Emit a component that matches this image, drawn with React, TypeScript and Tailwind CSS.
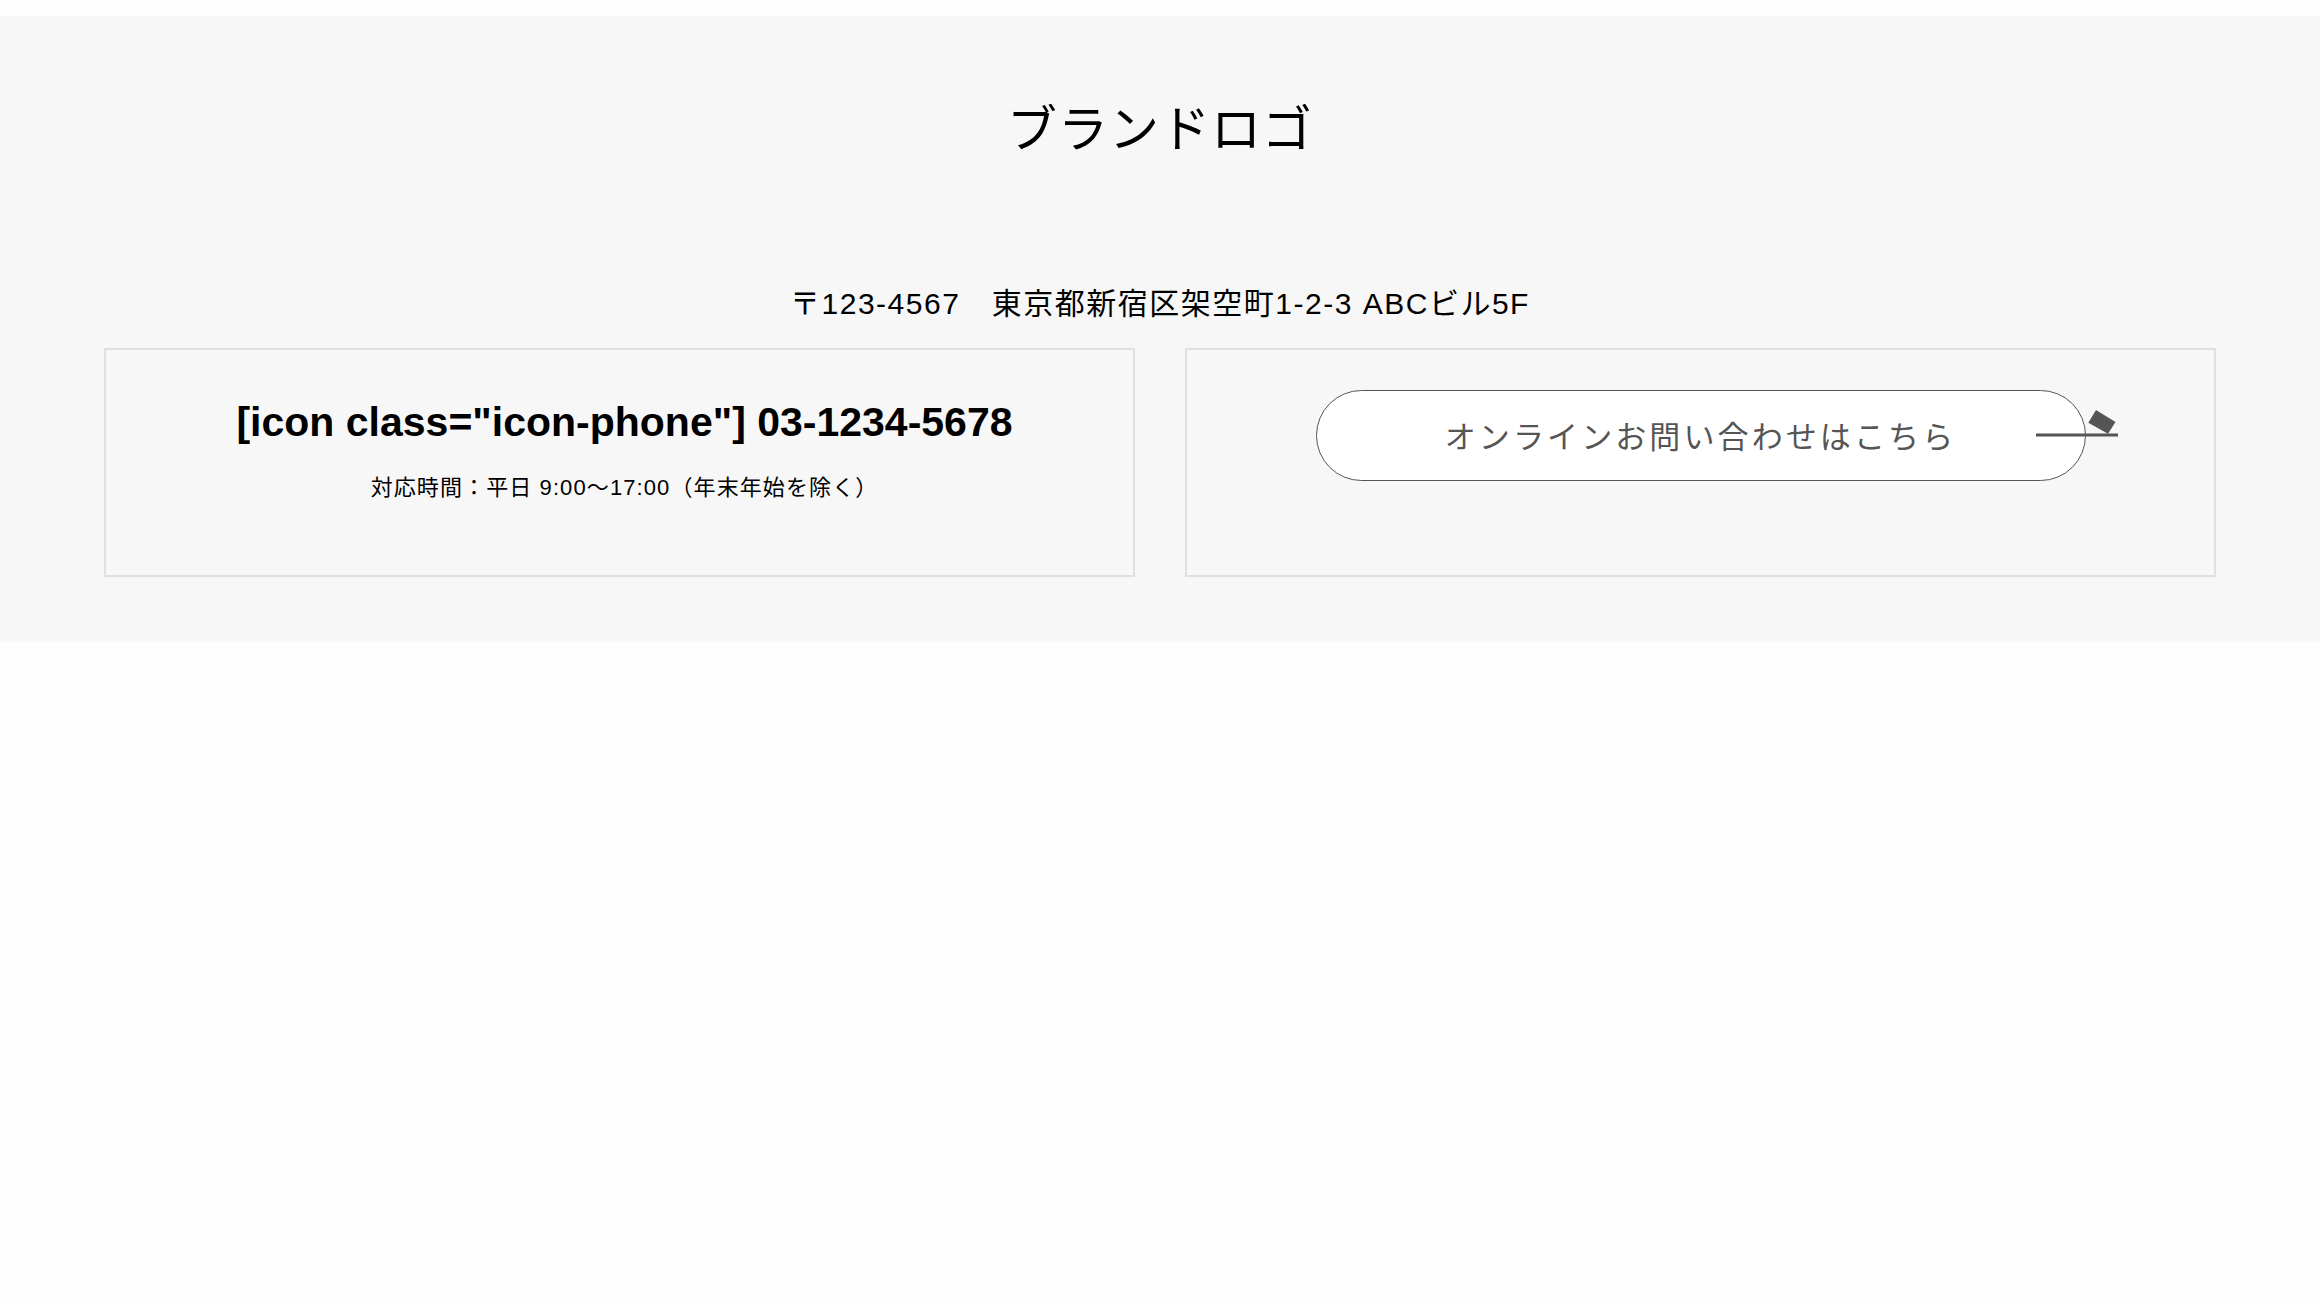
import React from "react";

const jp = "font-['Liberation_Sans','Noto_Sans_CJK_JP',sans-serif]";

function ArrowMark() {
  return (
    <svg className="absolute right-[-35px] top-[17px] pointer-events-none" width="84" height="30" viewBox="0 0 84 30" fill="none">
      <line x1="0" y1="27" x2="82" y2="27" stroke="#555" strokeWidth="3" />
      <polygon points="60,2 79.5,14 72,25.7 52.3,14.7" fill="#555" />
    </svg>
  );
}

export default function App() {
  return (
    <div className={`min-h-screen bg-[#fdfdfd] pt-[16px] ${jp}`}>
      <footer className="bg-[#f7f7f7] pt-[77px] pb-[65px]">
        <div className="text-center text-[50px] leading-[1.5] tracking-[1px] text-black">ブランドロゴ</div>

        <p className="mt-[113px] text-center text-[30px] leading-[1.5] tracking-[0.05em] text-black">
          〒123-4567　東京都新宿区架空町1-2-3 ABCビル5F
        </p>

        <div className="mx-auto mt-[22px] grid w-[2112px] grid-cols-2 gap-[50px]">
          <div className="h-[229px] border-2 border-[#e0e0e0] pt-[42px] pl-[10px] text-center">
            <div className="text-[41px] font-bold leading-[1.5] text-black">[icon class="icon-phone"] 03-1234-5678</div>
            <div className="mt-[17px] text-[22px] leading-[1.5] tracking-[0.05em] text-black">対応時間：平日 9:00〜17:00（年末年始を除く）</div>
          </div>

          <div className="flex h-[229px] justify-center border-2 border-[#e0e0e0] pt-[40px]">
            <a href="#" className="relative flex h-[91px] w-[770px] items-center justify-center rounded-full border border-[#555] bg-white pt-[5px] text-[31px] tracking-[0.1em] text-[#555]">
              オンラインお問い合わせはこちら
              <ArrowMark />
            </a>
          </div>
        </div>
      </footer>
    </div>
  );
}
